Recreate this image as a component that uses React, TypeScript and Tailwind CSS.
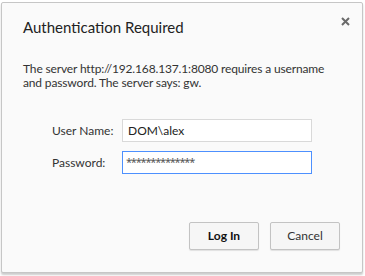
export default function App() {
  return (
    <div className="w-[365px] h-[276px] bg-white pt-[2px] pl-[1px]" style={{ fontFamily: 'Lato, "Noto Sans", sans-serif' }}>
      <div className="relative w-[362px] h-[271px] bg-[#fafafa] border border-[#c6c6c6] shadow-[0_2px_2px_rgba(0,0,0,0.2)] rounded-[2px]">
        <button className="absolute top-[11px] right-[10px] w-[14px] h-[14px] flex items-center justify-center">
          <svg width="9" height="9" viewBox="0 0 9 9">
            <path d="M1 1 L8 8 M8 1 L1 8" stroke="#6a6a6a" strokeWidth="2" />
          </svg>
        </button>
        <div className="pl-[21px] pt-[14px]">
          <h1 className="text-[15px] leading-[20px] text-[#222]">Authentication Required</h1>
          <p className="mt-[25px] text-[12px] leading-[14px] tracking-[-0.15px] text-[#333]">
            The server http://192.168.137.1:8080 requires a username
            <br />
            and password. The server says: gw.
          </p>
        </div>
        <div className="mt-[29px] pl-[50px] flex flex-col gap-[9px] text-[12px] text-[#333]">
          <div className="flex items-center">
            <label className="w-[70px]">User Name:</label>
            <div className="w-[190px] h-[23px] bg-white border border-[#d9d9d9] flex items-center px-[5px] text-[#222]">
              DOM\alex
            </div>
          </div>
          <div className="flex items-center">
            <label className="w-[70px]">Password:</label>
            <div
              className="w-[190px] h-[23px] bg-white border border-[#4d90fe] flex items-center px-[3px] text-[11px] text-[#555] tracking-[-1.2px]"
              style={{ fontFamily: '"Noto Sans", sans-serif' }}
            >
              **************
            </div>
          </div>
        </div>
        <div className="absolute right-[22px] bottom-[22px] flex gap-[11px] text-[12px]">
          <button className="w-[70px] h-[28px] border border-[#c3c3c3] rounded-[2px] bg-[#f6f6f6] shadow-[0_1px_1px_rgba(0,0,0,0.1)] font-bold text-[#111]">
            Log In
          </button>
          <button className="w-[70px] h-[28px] border border-[#c3c3c3] rounded-[2px] bg-[#f6f6f6] shadow-[0_1px_1px_rgba(0,0,0,0.1)] text-[#333]">
            Cancel
          </button>
        </div>
      </div>
    </div>
  );
}
